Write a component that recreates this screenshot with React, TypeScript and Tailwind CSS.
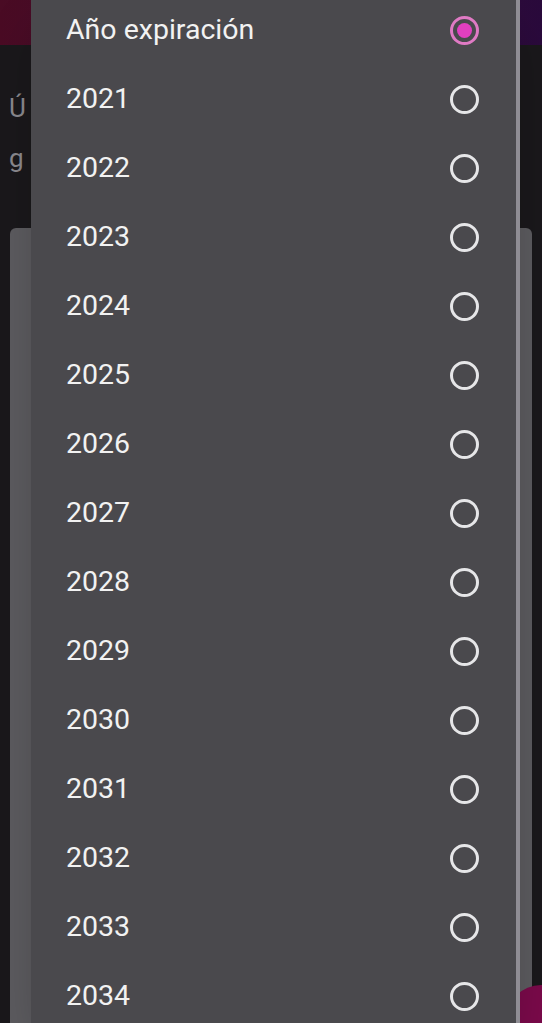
import React from "react";

const years = [
  2021, 2022, 2023, 2024, 2025, 2026, 2027, 2028, 2029, 2030, 2031, 2032,
  2033, 2034,
];

function Radio({ checked }: { checked?: boolean }) {
  if (checked) {
    return (
      <span className="flex h-[29px] w-[29px] items-center justify-center rounded-full border-[3px] border-[#e07ac4]">
        <span className="h-[15px] w-[15px] rounded-full bg-[#e23fc0]" />
      </span>
    );
  }
  return (
    <span className="h-[29px] w-[29px] rounded-full border-[3px] border-[#e6e6e8]" />
  );
}

export default function App() {
  return (
    <div
      className="relative h-[1023px] w-[542px] overflow-hidden bg-[#1a181b]"
      style={{ fontFamily: "Roboto, 'Noto Sans', sans-serif" }}
    >
      {/* page behind the dialog */}
      <div className="h-[45px] bg-gradient-to-r from-[#4a0b24] via-[#3a0b30] to-[#2a0a3c]" />
      <div className="flex flex-col gap-[24px] px-[9px] pt-[50px] text-[26px] leading-none text-[#8a898e]">
        <span>Ú</span>
        <span>g</span>
      </div>
      <div className="mx-[10px] mt-[57px] h-[820px] rounded-t-[6px] bg-[#5c5b5f]" />
      <div className="absolute right-[-34px] top-[985px] h-[70px] w-[70px] rounded-full bg-[#7a0a4a]" />

      {/* dialog */}
      <div className="absolute left-[31px] top-[-4px] w-[489px] border-r-[4px] border-[#8f8d94] bg-[#4a494d] shadow-2xl">
        <div className="flex h-[69px] items-center justify-between pl-[35px] pr-[37px]">
          <span className="text-[28.5px] text-[#f2f2f2]">Año expiración</span>
          <Radio checked />
        </div>
        {years.map((y) => (
          <div
            key={y}
            className="flex h-[69px] items-center justify-between pl-[35px] pr-[37px]"
          >
            <span className="text-[28.5px] text-[#f2f2f2]">{y}</span>
            <Radio />
          </div>
        ))}
      </div>
    </div>
  );
}
